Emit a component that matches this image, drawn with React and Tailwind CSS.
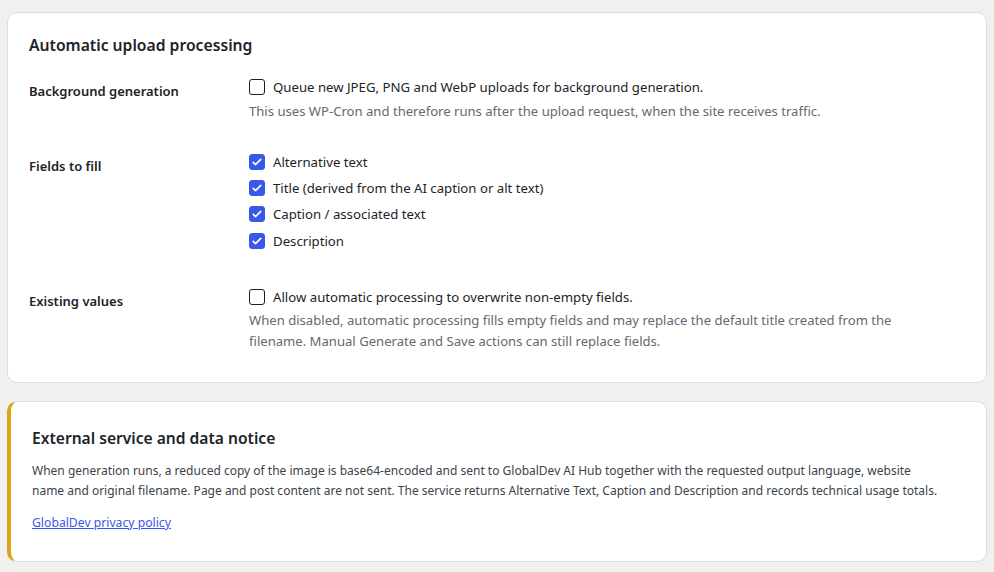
import React, { useState } from 'react';

const Check = ({ checked, onChange }) => (
    <span
        onClick={onChange}
        className={`flex items-center justify-center w-4 h-4 shrink-0 rounded-[3px] cursor-pointer
                    ${checked ? 'bg-[#3858e9] border border-[#3858e9]' : 'bg-white border border-[#1e1e1e]'}`}
    >
        {checked && (
            <svg viewBox="0 0 16 16" className="w-3 h-3">
                <path d="M3 8.4l3 3L13 4.6" fill="none" stroke="#fff" strokeWidth="2.2" strokeLinecap="round" strokeLinejoin="round" />
            </svg>
        )}
    </span>
);

const CheckRow = ({ label, checked, onChange }) => (
    <label className="flex items-center gap-2 text-[13.2px] leading-[20px] text-[#1d2327]">
        <Check checked={checked} onChange={onChange} />
        <span>{label}</span>
    </label>
);

const Row = ({ label, children, className = '' }) => (
    <div className={`flex ${className}`}>
        <div className="w-[220px] shrink-0 pt-[4px] text-[13px] font-semibold leading-[20px] text-[#1d2327]">
            {label}
        </div>
        <div className="flex-1">{children}</div>
    </div>
);

export default function App() {
    const [queue, setQueue] = useState(false);
    const [overwrite, setOverwrite] = useState(false);
    const [fields, setFields] = useState({ alt: true, title: true, caption: true, description: true });
    const toggle = (k) => setFields({ ...fields, [k]: !fields[k] });

    return (
        <div className="min-h-screen bg-[#f0f0f1] px-[7px] pt-[12px] pb-4 font-['Noto_Sans',sans-serif]">
            {/* Settings card */}
            <div className="bg-white border border-[#dcdcde] rounded-[10px] px-[21px] pt-[21px] pb-[30px]">
                <h2 className="text-[15.7px] font-semibold leading-[22px] text-[#1d2327]">Automatic upload processing</h2>

                <Row label="Background generation" className="mt-[21px]">
                    <CheckRow label="Queue new JPEG, PNG and WebP uploads for background generation." checked={queue} onChange={() => setQueue(!queue)} />
                    <p className="mt-[4px] text-[13.1px] leading-[21px] text-[#646970]">
                        This uses WP-Cron and therefore runs after the upload request, when the site receives traffic.
                    </p>
                </Row>

                <Row label="Fields to fill" className="mt-[30px]">
                    <div className="flex flex-col gap-[6.2px]">
                        <CheckRow label="Alternative text" checked={fields.alt} onChange={() => toggle('alt')} />
                        <CheckRow label="Title (derived from the AI caption or alt text)" checked={fields.title} onChange={() => toggle('title')} />
                        <CheckRow label="Caption / associated text" checked={fields.caption} onChange={() => toggle('caption')} />
                        <CheckRow label="Description" checked={fields.description} onChange={() => toggle('description')} />
                    </div>
                </Row>

                <Row label="Existing values" className="mt-[36px]">
                    <CheckRow label="Allow automatic processing to overwrite non-empty fields." checked={overwrite} onChange={() => setOverwrite(!overwrite)} />
                    <p className="mt-[3.5px] max-w-[660px] text-[13.1px] leading-[21px] text-[#646970]">
                        When disabled, automatic processing fills empty fields and may replace the default title created from the filename. Manual Generate and Save actions can still replace fields.
                    </p>
                </Row>
            </div>

            {/* Notice card */}
            <div className="mt-[18px] bg-white border border-[#dcdcde] border-l-4 border-l-[#dba617] rounded-[10px] px-[21px] pt-[25px] pb-[28px]">
                <h2 className="text-[15.6px] font-semibold leading-[22px] text-[#1d2327]">External service and data notice</h2>
                <p className="mt-[12px] max-w-[909px] text-[12px] leading-[20px] text-[#3c434a]">
                    When generation runs, a reduced copy of the image is base64-encoded and sent to GlobalDev AI Hub together with the requested output language, website name and original filename. Page and post content are not sent. The service returns Alternative Text, Caption and Description and records technical usage totals.
                </p>
                <a href="#" className="inline-block mt-[12px] text-[12.2px] leading-[20px] text-[#3858e9] underline">
                    GlobalDev privacy policy
                </a>
            </div>
        </div>
    );
}
